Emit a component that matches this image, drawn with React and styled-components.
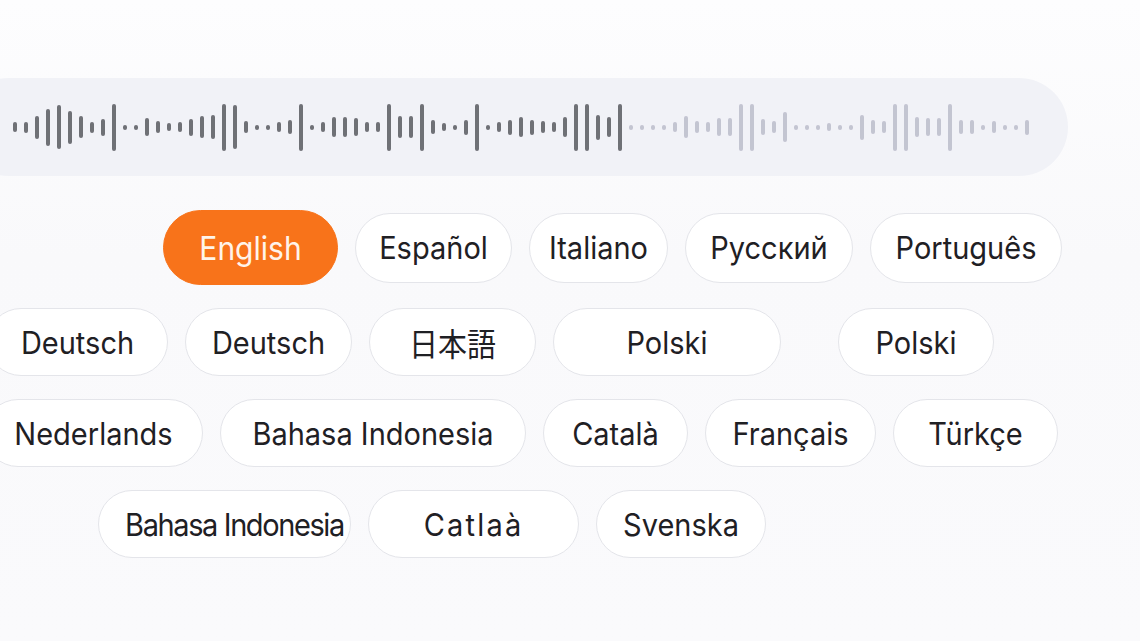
import styled, { createGlobalStyle } from 'styled-components'

const GlobalStyle = createGlobalStyle`
  html, body {
    margin: 0;
    padding: 0;
    background: #fafafc;
  }
  body {
    font-family: Inter, "Noto Sans", "Noto Sans CJK JP", sans-serif;
    overflow: hidden;
  }
`

// bar heights in px, 5 = dot
const waveHeights = [
  10, 11, 23, 37, 44, 33, 22, 11, 17, 47, 5, 5, 18, 12, 8, 10, 17, 22, 24, 47, 44, 12,
  5, 5, 10, 14, 47,
  5, 10, 20, 20, 18, 10, 10, 47, 22, 22, 47, 14, 8, 5, 15, 47, 5, 10, 15, 20, 15, 12,
  10, 20, 47, 47, 25, 20, 47,
  5, 5, 5, 5, 10, 22, 12, 10, 18, 18, 47, 47, 16, 12, 30, 5, 5, 5, 8, 5, 5, 25, 14, 12,
  47, 47, 20, 18, 18, 47, 14, 14, 5, 12, 5, 5, 15,
]
const PLAYED = 56

const rows = [
  {
    offset: 163,
    h: 70,
    items: [
      { label: 'English', w: 175, active: true },
      { label: 'Español', w: 157 },
      { label: 'Italiano', w: 139 },
      { label: 'Русский', w: 168 },
      { label: 'Português', w: 192 },
    ],
  },
  {
    offset: -13,
    h: 68,
    items: [
      { label: 'Deutsch', w: 181 },
      { label: 'Deutsch', w: 167 },
      { label: '日本語', w: 167 },
      { label: 'Polski', w: 228 },
      { label: 'Polski', w: 156, shift: 40 },
    ],
  },
  {
    offset: -16,
    h: 68,
    items: [
      { label: 'Nederlands', w: 219 },
      { label: 'Bahasa Indonesia', w: 306 },
      { label: 'Català', w: 145 },
      { label: 'Français', w: 171 },
      { label: 'Türkçe', w: 165 },
    ],
  },
  {
    offset: 98,
    h: 68,
    items: [
      { label: 'Bahasa Indonesia', w: 253, spacing: -1.4, padLeft: 20 },
      { label: 'Catlaà', w: 211, spacing: 2.2 },
      { label: 'Svenska', w: 170 },
    ],
  },
]

export default function App() {
  return (
    <Page>
      <GlobalStyle />
      <Wave>
        {waveHeights.map((h, i) => (
          <Bar key={i} $h={h} $played={i < PLAYED} />
        ))}
      </Wave>
      <Rows>
        {rows.map((row, r) => (
          <Row key={r} $offset={row.offset}>
            {row.items.map((it, i) => (
              <Pill
                key={i}
                $w={it.w}
                $h={it.active ? 75 : row.h}
                $active={it.active}
                $shift={it.shift || 0}
                $padLeft={it.padLeft || 0}
              >
                <Label $spacing={it.spacing || 0} $active={it.active}>
                  {it.label}
                </Label>
              </Pill>
            ))}
          </Row>
        ))}
      </Rows>
    </Page>
  )
}

//#region STYLED COMPONENTS
const Page = styled.div`
  width: 1140px;
  height: 641px;
  padding-top: 78px;
  box-sizing: border-box;
  background: linear-gradient(#fdfdfe, #f9f9fb 40%, #fafafc);
`

const Wave = styled.div`
  margin-left: -40px;
  width: 1108px;
  height: 98px;
  border-radius: 49px;
  background: #f1f2f7;
  display: flex;
  align-items: center;
  gap: 7px;
  padding-left: 53px;
  box-sizing: border-box;
`

const Bar = styled.span`
  flex: none;
  width: 4px;
  height: ${(p) => p.$h}px;
  border-radius: 2px;
  background: ${(p) => (p.$played ? '#6f7176' : '#c3c5d1')};
`

const Rows = styled.div`
  margin-top: 34px;
  display: flex;
  flex-direction: column;
  gap: 23px;
`

const Row = styled.div`
  display: flex;
  align-items: center;
  gap: 17px;
  margin-left: ${(p) => p.$offset}px;
`

const Pill = styled.div`
  flex: none;
  box-sizing: border-box;
  width: ${(p) => p.$w}px;
  height: ${(p) => p.$h}px;
  margin-left: ${(p) => p.$shift}px;
  padding-left: ${(p) => p.$padLeft}px;
  border-radius: 999px;
  display: flex;
  align-items: center;
  justify-content: center;
  background: ${(p) => (p.$active ? '#f8731a' : '#ffffff')};
  border: 1.5px solid ${(p) => (p.$active ? '#f8731a' : '#e4e5ea')};
`

const Label = styled.span`
  font-size: ${(p) => (p.$active ? 30 : 29)}px;
  font-weight: 400;
  letter-spacing: ${(p) => p.$spacing}px;
  white-space: nowrap;
  color: ${(p) => (p.$active ? '#fff4ea' : '#1f2024')};
  display: inline-block;
  transform: scaleY(1.08);
`
//#endregion
